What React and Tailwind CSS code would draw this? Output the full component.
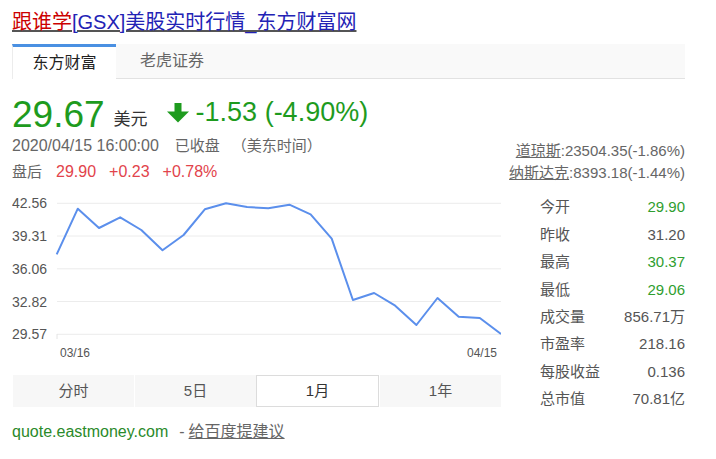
import React from 'react';

const FONT = { fontFamily: '"Liberation Sans", Arial, "Noto Sans CJK SC", sans-serif' };

const pts = [
  [56.7, 254.3], [77.8, 208.7], [99, 228], [120.2, 217.3], [141.3, 230], [162.5, 250.3],
  [183.6, 235], [204.8, 209.3], [226, 203.3], [247.1, 207], [268.3, 208.3], [289.4, 204.7],
  [310.6, 214.3], [331.7, 238.7], [352.9, 300], [374.1, 293], [395.2, 305.7], [416.4, 325],
  [437.5, 298], [458.7, 316.7], [479.8, 318], [501, 334],
];

const grid = [
  { y: 203.3, label: '42.56' },
  { y: 236, label: '39.31' },
  { y: 268.8, label: '36.06' },
  { y: 301.5, label: '32.82' },
  { y: 334.3, label: '29.57' },
];

const stats = [
  { k: '今开', v: '29.90', green: true },
  { k: '昨收', v: '31.20' },
  { k: '最高', v: '30.37', green: true },
  { k: '最低', v: '29.06', green: true },
  { k: '成交量', v: '856.71万' },
  { k: '市盈率', v: '218.16' },
  { k: '每股收益', v: '0.136' },
  { k: '总市值', v: '70.81亿' },
];

const ranges = ['分时', '5日', '1月', '1年'];

// chart origin: page x 12, page y 185
const OX = 12;
const OY = 185;

const Chart = () => {
  const line = pts.map(([x, y]) => `${(x - OX).toFixed(1)},${(y - OY).toFixed(1)}`).join(' ');
  return (
    <svg width="489" height="190" viewBox="0 0 489 190" className="block">
      {grid.map((g) => (
        <g key={g.label}>
          <line x1="45" x2="489" y1={g.y - OY} y2={g.y - OY} stroke="#ececec" strokeWidth="1" />
          <text x="35" y={g.y - OY} textAnchor="end" dominantBaseline="central" fontSize="14" fill="#555" style={FONT}>
            {g.label}
          </text>
        </g>
      ))}
      <line x1="45" x2="45" y1="149" y2="154" stroke="#e4e4e4" strokeWidth="1" />
      <polyline points={line} fill="none" stroke="#5b8fec" strokeWidth="2" strokeLinejoin="round" />
      <text x="48" y="168" dominantBaseline="central" fontSize="12" fill="#555" style={FONT}>03/16</text>
      <text x="485" y="168" textAnchor="end" dominantBaseline="central" fontSize="12" fill="#555" style={FONT}>04/15</text>
    </svg>
  );
};

const DownArrow = () => (
  <svg width="22" height="20" viewBox="0 0 22 20" className="mb-[10px] ml-[19px] block">
    <rect x="7.5" y="0" width="7" height="9.5" fill="#1e9b1e" />
    <polygon points="0,8.5 22,8.5 11,19.5" fill="#1e9b1e" />
  </svg>
);

export default function App() {
  return (
    <div className="w-[697px] px-3 bg-white text-[#555]" style={FONT}>
      {/* title */}
      <div className="pt-2 h-[36px] text-[20px] leading-[28px]">
        <a href="#" className="underline">
          <span className="text-[#cc0000]">跟谁学</span>
          <span className="text-[#2323b5]">[GSX]美股实时行情_东方财富网</span>
        </a>
      </div>

      {/* tabs */}
      <div className="mt-2 flex h-[35px] bg-[#f9f9f9] border-b border-[#e2e2e2]">
        <div className="w-[104px] h-[35px] -mb-px bg-white border-t-[3px] border-t-[#4a90e2] border-l border-l-[#ececec] flex items-center justify-center text-[16px] text-[#222]">
          东方财富
        </div>
        <div className="w-[112px] flex items-center justify-center text-[16px] text-[#666]">老虎证券</div>
      </div>

      {/* quote header */}
      <div className="flex justify-between items-end">
        <div className="pt-[17px]">
          <div className="flex items-end">
            <span className="text-[37px] leading-[37px] text-[#1e9b1e]">29.67</span>
            <span className="ml-[9px] mb-[5px] text-[17px] leading-[17px] text-[#333]">美元</span>
            <DownArrow />
            <span className="ml-[7px] mb-[7px] text-[27px] leading-[27px] text-[#1e9b1e]">-1.53 (-4.90%)</span>
          </div>
          <div className="h-[26px] flex items-center text-[15px] text-[#666]">
            <span className="text-[16px]">2020/04/15 16:00:00</span>
            <span className="ml-[16px]">已收盘</span>
            <span className="ml-[12px]">（美东时间）</span>
          </div>
          <div className="h-[26px] flex items-center text-[16px]">
            <span className="text-[15px] text-[#666]">盘后</span>
            <span className="ml-[14px] text-[#e2434b]">29.90</span>
            <span className="ml-[13px] text-[#e2434b]">+0.23</span>
            <span className="ml-[13px] text-[#e2434b]">+0.78%</span>
          </div>
        </div>
        <div className="pb-[1px] text-right text-[15px] leading-[22px] text-[#666]">
          <div><span className="underline">道琼斯</span>:23504.35(-1.86%)</div>
          <div><span className="underline">纳斯达克</span>:8393.18(-1.44%)</div>
        </div>
      </div>

      {/* chart + stats */}
      <div className="flex">
        <div className="w-[489px]">
          <Chart />
          <div className="flex h-[32px] bg-[#f7f7f7] text-[15px]">
            {ranges.map((r, i) => (
              <div
                key={r}
                className={
                  i === 2
                    ? 'flex-1 flex items-center justify-center bg-white border border-[#dcdcdc] text-[#333]'
                    : 'flex-1 flex items-center justify-center border-l border-l-white text-[#555]'
                }
              >
                {r}
              </div>
            ))}
          </div>
        </div>
        <div className="flex-1 pl-[39px] pt-[9px] text-[15px]">
          {stats.map((s) => (
            <div key={s.k} className="h-[27.4px] flex items-center justify-between">
              <span className="text-[#555]">{s.k}</span>
              <span className={s.green ? 'text-[#2f9e2f]' : 'text-[#555]'}>{s.v}</span>
            </div>
          ))}
        </div>
      </div>

      {/* footer */}
      <div className="mt-[7px] h-[24px] flex items-center text-[16px]">
        <span className="text-[#2a8a2a]">quote.eastmoney.com</span>
        <span className="ml-[11px] text-[#666]">-</span>
        <a href="#" className="ml-[4px] underline text-[#666]">给百度提建议</a>
      </div>
    </div>
  );
}
